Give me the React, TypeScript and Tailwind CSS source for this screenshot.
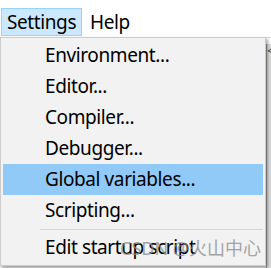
const items = [
  'Environment...',
  'Editor...',
  'Compiler...',
  'Debugger...',
  'Global variables...',
  'Scripting...',
];

export default function App() {
  return (
    <div
      className="relative flex h-[268px] w-[271px] flex-col overflow-hidden bg-white text-black"
      style={{ fontFamily: '"Noto Sans", "Open Sans", sans-serif' }}
    >
      {/* menu bar */}
      <div className="flex h-[37px] shrink-0 items-start gap-[3px] pt-[8px] pl-[1px] text-[19px] tracking-[-0.4px]">
        <div className="flex h-[28px] items-center border border-[#99d1ff] bg-[#cce8ff] px-[5px] leading-none">
          Settings
        </div>
        <div className="flex h-[28px] items-center px-[5px] leading-none">Help</div>
      </div>

      {/* app area behind the menu */}
      <div className="flex flex-1 border-t border-[#d8d8d8] bg-[#f0f0f0]">
        <div className="flex-1" />
        <div className="flex w-[5px] flex-col">
          <div className="h-[6px] bg-white" />
          <div className="flex-1 border-l border-[#a0a0a0] bg-[#dcdcdc] text-[14px] leading-none text-[#555]">
            &lt;
          </div>
        </div>
      </div>

      {/* dropdown */}
      <div className="absolute top-[37px] left-0 w-[266px] border border-[#cccccc] bg-[#f2f2f2] p-[2px] text-[19px] tracking-[-0.4px] shadow-[2px_2px_3px_rgba(0,0,0,0.35)]">
        {items.map(label => (
          <div
            key={label}
            className={`flex h-[31px] items-center pl-[42px] leading-none ${
              label === 'Global variables...' ? 'bg-[#91c9f7]' : ''
            }`}
          >
            {label}
          </div>
        ))}
        <div className="flex h-[6px] items-center pl-[37px]">
          <div className="h-px w-full bg-[#d7d7d7]" />
        </div>
        <div className="flex h-[31px] items-center pl-[42px] leading-none">Edit startup script</div>
      </div>

      {/* watermark */}
      <div
        className="absolute top-[239px] left-[120px] text-[18px] leading-none text-[#8a8a8a] opacity-75"
        style={{ fontFamily: '"Noto Sans", "Noto Sans CJK SC", sans-serif' }}
      >
        CSDN @火山中心
      </div>
    </div>
  );
}
